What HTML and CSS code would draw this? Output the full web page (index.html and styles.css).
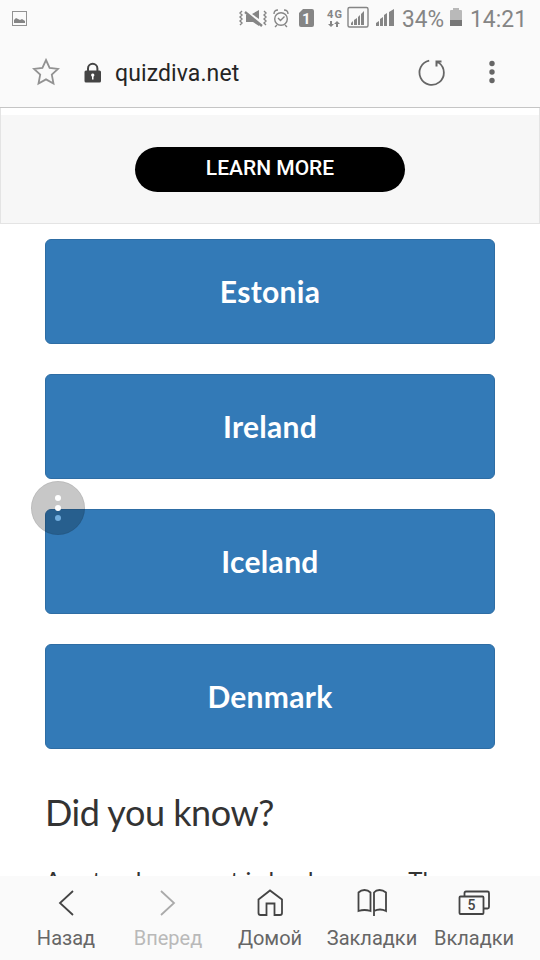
FILE: index.html
```html
<!DOCTYPE html>
<html lang="ru">
<head>
<meta charset="utf-8">
<meta name="viewport" content="width=device-width">
<title>quizdiva.net</title>
<link rel="stylesheet" href="styles.css">
</head>
<body>
<header>
  <div class="status">
    <svg class="status-icons" width="540" height="36" viewBox="0 0 540 36">
      <g fill="none" stroke="#929292"><rect x="12.5" y="11.5" width="14" height="14"/></g>
      <path fill="#858585" d="M14 23v-3l2-2 2 1 2 1 2-1 3 2v2z"/>
      <g fill="none" stroke="#858585" stroke-width="1.4">
        <path d="M242 11l-2 2 2 2-2 2 2 2-2 2 2 2-2 2M264 11l2 2-2 2 2 2-2 2 2 2-2 2 2 2"/>
        <path d="M245 12l17 14" stroke-width="2.4"/>
        <circle cx="281" cy="19" r="6.3"/><path d="M278 18l2.5 2.5 4-4M274 14q0-4 4-4M284 10q4 0 4 4M277 25l-2 2M285 25l2 2"/>
        <rect x="348" y="7.5" width="20" height="19.5" rx="1.5"/>
      </g>
      <path fill="#858585" d="M246 15h3l10 8v3l-6-4h-7zM252 14l7-4v9zM303 9h9q2 0 2 2v14q0 2-2 2h-11q-2 0-2-2V13zM330 21h2v3h2l-3 3-3-3h2zM336 27v-3h-2l3-3 3 3h-2v3z"/>
      <path fill="#858585" d="M351 25v-2l2-2v4zM354 25v-5l3-2v7zM358 25v-8l2-2v10zM361 25V14l3-3v14zM376 26v-3l3-2v5zM380 26v-7l3-2v9zM384 26V15l3-2v13zM389 26V12l5-3v17z"/>
      <path fill="#b9b9b9" d="M450 11q0-1 1-1h2V8h6v2h2q1 0 1 1v9h-12z"/><path fill="#777" d="M450 20h12v6h-12z"/>
      <g fill="#fafafa" font-family="Roboto" font-weight="700" font-size="15"><text x="302" y="23.5">1</text></g>
      <g fill="#858585" font-family="Roboto"><text x="327" y="18" font-size="11" font-weight="700" textLength="15">4G</text>
      <text x="402" y="27" font-size="23.5" textLength="42" lengthAdjust="spacingAndGlyphs">34%</text><text x="470" y="27" font-size="23.5" textLength="57" lengthAdjust="spacingAndGlyphs">14:21</text></g>
    </svg>
  </div>
  <div class="address">
    <svg class="star" width="28" height="28" viewBox="0 0 28 28"><path d="M14 2l3.600 7.800 8.400 1-6.200 5.800 1.700 8.900L14 21.400l-7.500 4.100 1.700-8.900L2 10.800l8.400-1z"/></svg>
    <svg class="lock" width="18" height="22" viewBox="0 0 18 22"><path d="M4 11V7.500a4.700 4.700 0 0 1 9.400 0V11" fill="none" stroke="#444" stroke-width="2"/><rect x=".5" y="9.500" width="16.500" height="12" rx="1.500" fill="#444"/><path d="M8.700 12.500a1.700 1.700 0 0 1 .8 3.200v2.800H8v-2.800a1.700 1.700 0 0 1 .7-3.200z" fill="#fff"/></svg>
    <span class="url">quizdiva.net</span>
    <svg class="reload" width="30" height="30" viewBox="0 0 30 30"><path d="M12.200 3.700A12.200 12.200 0 1 0 22 5.900L19.500 5" fill="none" stroke="#666" stroke-width="1.800"/><path d="M18.500 3.500h6v2h-3l-1 1v3h-2z" fill="#666"/></svg>
    <svg class="more" width="6" height="24" viewBox="0 0 6 24" fill="#666"><circle cx="3" cy="3.500" r="2.700"/><circle cx="3" cy="12" r="2.700"/><circle cx="3" cy="20.500" r="2.700"/></svg>
  </div>
</header>
<section class="ad"><div class="ad-body"><a class="learn">LEARN MORE</a></div></section>
<main>
  <div class="answer">Estonia</div>
  <div class="answer">Ireland</div>
  <div class="answer">Iceland</div>
  <div class="answer">Denmark</div>
  <h2>Did you know?</h2>
  <p>A natural segment is land masses. The</p>
</main>
<svg class="bubble" width="56" height="56" viewBox="0 0 56 56"><circle cx="28" cy="28" r="27" fill="#000" fill-opacity=".22"/><circle cx="28" cy="28" r="26.500" fill="none" stroke="#000" stroke-opacity=".06"/><g fill="#fff"><circle cx="28" cy="18" r="3"/><circle cx="28" cy="28" r="3"/><circle cx="28" cy="38" r="3" fill="#71addd"/></g></svg>
<nav>
  <div class="tab"><svg width="32" height="32" viewBox="0 0 32 32"><path d="M23 4L10 16l13 12"/></svg><span>Назад</span></div>
  <div class="tab off"><svg width="32" height="32" viewBox="0 0 32 32"><path d="M9 4l13 12L9 28"/></svg><span>Вперед</span></div>
  <div class="tab"><svg width="32" height="32" viewBox="0 0 32 32"><path d="M4.500 12.500L16 3.500l12 9V26q0 2-2 2h-5.500V16.500h-8V28H6.500q-2 0-2-2z"/></svg><span>Домой</span></div>
  <div class="tab"><svg width="32" height="32" viewBox="0 0 32 32"><path d="M18 29V5.500Q20 3 23.500 3T30 5.500V24q-3-1.500-6-1.500T18 24M14.500 5.500Q12 3 8.500 3T2.500 5.500V24q3-1 6-1t6 1z"/></svg><span>Закладки</span></div>
  <div class="tab"><svg width="32" height="32" viewBox="0 0 32 32"><path d="M6.500 9V6q0-1.500 1.500-1.500h21.500Q31 4.500 31 6v14q0 1.500-1.500 1.500H26M2.500 9.500h22q1 0 1 1V26q0 1-1 1h-22q-1 0-1-1V10.500q0-1 1-1z"/><text x="9.500" y="23">5</text></svg><span>Вкладки</span></div>
</nav>
</body>
</html>
```
FILE: styles.css
```css
* { box-sizing: border-box; }
body { margin: 0; width: 540px; height: 960px; overflow: hidden; position: relative; display: flex; flex-direction: column; background: #fff; font-family: Lato, sans-serif; }
header { height: 108px; flex: none; background: #fafafa; border-bottom: 1px solid #c5c5c5; font-family: Roboto, sans-serif; }
.status { height: 36px; }
.status-icons { display: block; }
.address { height: 72px; display: flex; align-items: center; padding: 0 45px 0 32px; }
.star { fill: none; stroke: #929292; stroke-width: 1.8; }
.lock { margin: 0 13px 0 24px; }
.url { flex: 1; padding-top: 2px; font-size: 23px; letter-spacing: .1px; color: #252525; }
.reload { margin-right: 42px; }
.ad { height: 116px; flex: none; border: 1px solid #e4e4e4; border-top: 0; padding-top: 7px; }
.ad-body { height: 108px; background: #f7f7f7; padding-top: 31.5px; }
.learn { display: block; width: 270px; height: 45px; margin: 0 auto; border-radius: 23px; background: #000; color: #fff; font: 500 21px/43px Roboto, sans-serif; text-align: center; }
main { flex: 1; min-height: 0; overflow: hidden; padding: 15px 45px 0; }
.answer { height: 105px; margin-bottom: 30px; border: 1px solid #2e6da4; border-radius: 6px; background: #337ab7; color: #fff; font-size: 30px; font-weight: 700; letter-spacing: .3px; line-height: 102px; text-align: center; }
h2 { margin: 43px 0 0; font-size: 36px; font-weight: 400; letter-spacing: -.45px; line-height: 40px; color: #333; }
p { margin: 31px 0 0; font-size: 24px; letter-spacing: .2px; line-height: 34px; color: #333; white-space: nowrap; }
.bubble { position: absolute; left: 30px; top: 480px; }
nav { height: 84px; flex: none; display: grid; grid-template-columns: repeat(5, 102px); padding: 11px 15px 0; background: #fafafa; font-family: Roboto, sans-serif; }
.tab { display: flex; flex-direction: column; align-items: center; color: #666; font-size: 20px; line-height: 24px; gap: 7px; }
.tab svg { fill: none; stroke: #444; stroke-width: 1.8; }
.tab text { fill: #444; stroke: none; font: 500 14px Roboto, sans-serif; }
.tab.off { color: #b9b9b9; }
.off svg { stroke: #aaa; }
```
